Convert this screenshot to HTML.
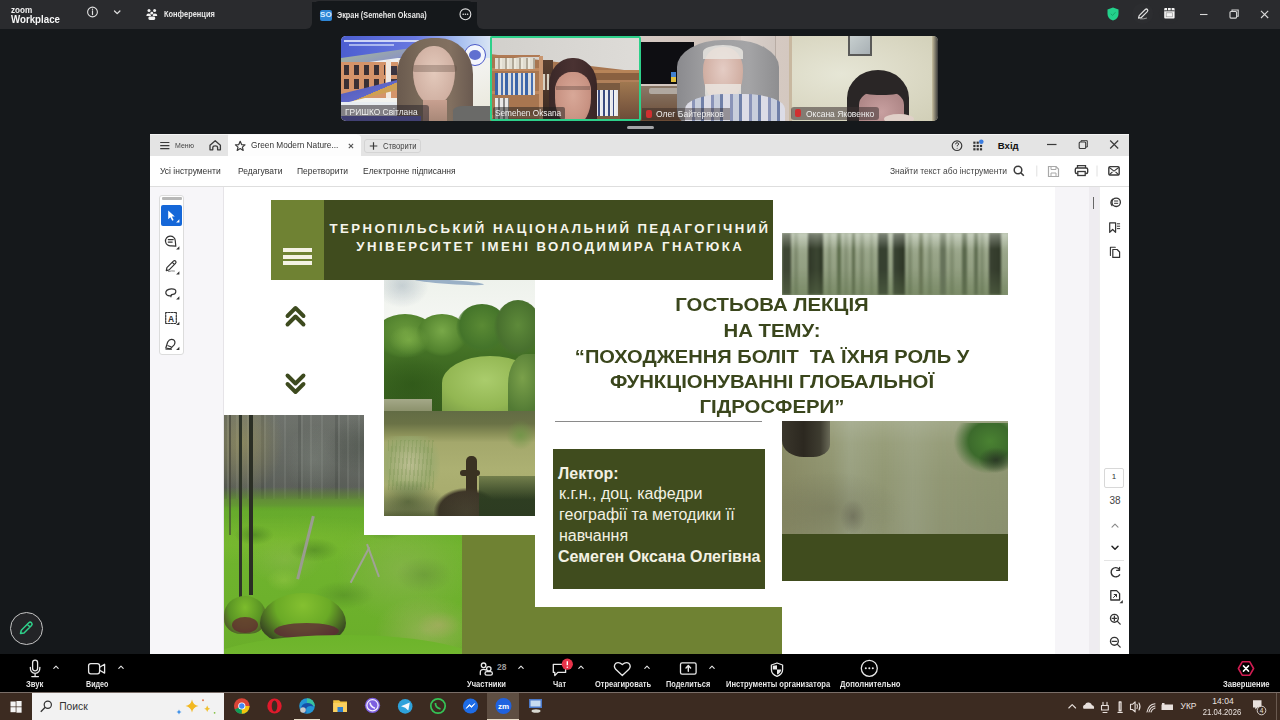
<!DOCTYPE html>
<html><head><meta charset="utf-8">
<style>
*{margin:0;padding:0;box-sizing:border-box}
html,body{width:1280px;height:720px;overflow:hidden;background:#15181b;font-family:"Liberation Sans",sans-serif}
.a{position:absolute}
.t{position:absolute;white-space:nowrap;line-height:1}
svg{position:absolute;overflow:visible}
.lb{top:679.5px;font-size:9px;font-weight:bold;color:#e6e6e6;transform-origin:0 0}
</style></head><body>

<!-- ZOOM TITLE BAR -->
<div class="a" style="left:0;top:0;width:312px;height:29.4px;background:#2a2b2e;border-radius:0 0 6px 0"></div>
<div class="a" style="left:477px;top:0;width:803px;height:29.4px;background:#2a2b2e;border-radius:0 0 0 6px"></div>
<div class="a" style="left:300px;top:0;width:190px;height:1.5px;background:#2a2b2e"></div>
<div class="a" id="tab" style="left:313px;top:1.4px;width:161px;height:30px;background:#15181b;border-radius:6px 6px 0 0"></div>


<div class="t" id="zoomt" style="transform:scaleX(0.87);transform-origin:0 0;left:10.5px;top:4.6px;font-size:9.4px;font-weight:bold;color:#f2f2f2">zoom</div>
<div class="t" id="wpt" style="transform:scaleX(0.86);transform-origin:0 0;left:10.5px;top:13.8px;font-size:11.3px;font-weight:bold;color:#f7f7f7">Workplace</div>
<div class="t" id="konf" style="transform:scaleX(0.81);transform-origin:0 0;left:164px;top:10.2px;font-size:9.2px;font-weight:bold;color:#e8e8e8">Конференция</div>
<div class="a" style="left:319.8px;top:9.5px;width:12.2px;height:11px;background:#2e86d6;border-radius:2px"></div>
<div class="t" style="left:319.8px;top:11px;width:12.2px;text-align:center;font-size:8px;font-weight:bold;color:#d8ecff">SO</div>
<div class="t" id="ekran" style="transform:scaleX(0.78);transform-origin:0 0;left:337.3px;top:9.8px;font-size:9.4px;font-weight:bold;color:#e8e8e8">Экран (Semehen Oksana)</div>
<svg style="left:0;top:0" width="1280" height="720">
 <g fill="none" stroke="#e0e0e0" stroke-linecap="round" stroke-linejoin="round">
  <circle cx="92.5" cy="12" r="4.9" stroke-width="1.1"/>
  <path d="M92.5 10.8 V14.6" stroke-width="1.2"/>
  <path d="M114.5 11 L117.2 13.6 L119.9 11" stroke-width="1.3"/>
  <circle cx="465.4" cy="14.3" r="5.4" stroke-width="1.1"/>
 </g>
 <g fill="#e0e0e0">
  <circle cx="92.5" cy="9.3" r="0.7"/>
  <circle cx="463.2" cy="14.3" r="0.8"/><circle cx="465.4" cy="14.3" r="0.8"/><circle cx="467.6" cy="14.3" r="0.8"/>
 </g>
 <!-- people icon -->
 <g fill="#f0f0f0">
  <circle cx="149" cy="10.6" r="1.5"/><circle cx="154.6" cy="10.6" r="1.5"/><circle cx="151.8" cy="13.2" r="1.4"/>
  <path d="M146.4 15.4 q0-1.8 2.2-1.8 q1.6 0 2.2 1.2 h0.1 v1.1 h-4.5z"/>
  <path d="M157.2 15.4 q0-1.8 -2.2-1.8 q-1.6 0 -2.2 1.2 v1.1 h4.4z"/>
  <rect x="148.4" y="16.6" width="6.8" height="3.3" rx="1.3"/>
 </g>
 <!-- green shield -->
 <path d="M1113 7.6 L1118.5 9.6 V14 Q1118.5 18.6 1113 20.6 Q1107.5 18.6 1107.5 14 V9.6 Z" fill="#23d18b"/>
 <path d="M1110.8 13.8 L1112.5 15.5 L1115.5 12.2" fill="none" stroke="#15a86a" stroke-width="1"/>
 <!-- pen circle -->
 <circle cx="1142.7" cy="13.5" r="10.5" fill="#2c2d30"/>
 <path d="M1138.5 18.2 L1139.2 15.6 L1145.3 9.5 Q1146.5 8.5 1147.4 9.5 Q1148.3 10.6 1147.3 11.6 L1141.1 17.7 Z" fill="none" stroke="#e0e0e0" stroke-width="1.2" stroke-linejoin="round"/>
 <path d="M1140 18.8 Q1144 19.2 1147 18" fill="none" stroke="#aaa" stroke-width="0.9"/>
 <!-- calendar/apps -->
 <circle cx="1169.4" cy="13.3" r="10.5" fill="#2a2b2e"/>
 <rect x="1164.2" y="8" width="10.4" height="10.6" rx="1" fill="#f4f4f4"/>
 <path d="M1164.2 10.8 H1174.6" stroke="#2a2b2e" stroke-width="0.9"/>
 <path d="M1167.5 8 v2.6 M1171.2 8 v2.6" stroke="#2a2b2e" stroke-width="0.9"/>
 <rect x="1166.2" y="12.8" width="6.4" height="4" fill="none" stroke="#999" stroke-width="0.7"/>
 <!-- window controls -->
 <g fill="none" stroke="#d8d8d8" stroke-width="1.1">
  <path d="M1200 14.5 H1207.5"/>
  <rect x="1230" y="11.5" width="6.6" height="6.6" rx="1"/>
  <path d="M1232 11.5 V10 H1238.2 V16.2 H1236.6"/>
  <path d="M1261 10.8 L1268.2 18 M1268.2 10.8 L1261 18"/>
 </g>
</svg>

<!-- GALLERY -->
<div class="a" id="g1" style="left:341px;top:36px;width:149px;height:85px;border-radius:5px 0 0 5px;overflow:hidden;background:linear-gradient(160deg,#e8eef8 0%,#f2f2ee 60%,#e8e6d8 100%)"><div class="a" style="left:0;top:0;right:0;bottom:0;filter:blur(0.6px)">
 <div class="a" style="left:0;top:0;width:149px;height:22px;background:linear-gradient(90deg,#4c5ed0,#6878e0 50%,#a8c0f0 80%,#d8e4f4)"></div>
 <div class="a" style="left:3px;top:4px;width:75px;height:2px;background:rgba(235,240,255,0.8)"></div>
 <div class="a" style="left:8px;top:8px;width:45px;height:1.5px;background:rgba(225,235,255,0.6)"></div>
 <div class="a" style="left:0;top:22px;width:78px;height:8px;background:linear-gradient(170deg,#a0b0a0,#8890c8);transform:skewY(-8deg);transform-origin:0 0"></div>
 <div class="a" style="left:0;top:26px;width:72px;height:36px;background:#d4946a"></div>
 <div class="a" style="left:0;top:29px;width:44px;height:10px;background:repeating-linear-gradient(90deg,#d4946a 0 3px,#3a3034 3px 8px,#d4946a 8px 10px)"></div>
 <div class="a" style="left:0;top:43px;width:44px;height:10px;background:repeating-linear-gradient(90deg,#d4946a 0 3px,#3a3034 3px 8px,#d4946a 8px 10px)"></div>
 <div class="a" style="left:50px;top:30px;width:6px;height:9px;background:#3a3440"></div>
 <div class="a" style="left:50px;top:43px;width:6px;height:9px;background:#3a3440"></div>
 <div class="a" style="left:45px;top:24px;width:5px;height:38px;background:#f0e8e0"></div>
 <div class="a" style="left:57px;top:24px;width:5px;height:38px;background:#f0e4d8"></div>
 <div class="a" style="left:0;top:58px;width:80px;height:10px;background:linear-gradient(170deg,#5860c0,#6068c8 50%,#d0a050 51%,#c8a060);transform:skewY(-14deg);transform-origin:0 100%"></div>
 <div class="a" style="left:0;top:66px;width:60px;height:19px;background:#e8ecf0"></div>
 <div class="a" style="left:123px;top:8px;width:22px;height:22px;border-radius:50%;background:#f4f6fc;border:1.5px solid #4a58c8"></div>
 <div class="a" style="left:128px;top:14px;width:12px;height:10px;border-radius:50%;background:#6070d0"></div>
 <div class="a" style="left:56px;top:2px;width:76px;height:90px;border-radius:45% 45% 20% 20%/40% 40% 10% 10%;background:linear-gradient(90deg,#6a5a4e,#7a6a5a 30%,#827060 70%,#6a5a50)"></div>
 <div class="a" style="left:72px;top:10px;width:42px;height:58px;border-radius:48% 48% 45% 45%/45% 45% 55% 55%;background:radial-gradient(ellipse at 50% 45%,#e4cabc,#d0b0a2 70%,#b89888)"></div>
 <div class="a" style="left:71px;top:29px;width:45px;height:7px;border-radius:3px;background:rgba(100,80,70,0.35)"></div>
 <div class="a" style="left:112px;top:70px;width:37px;height:15px;border-radius:30% 0 0 0;background:#6a6a68"></div>
 <div class="a" style="left:82px;top:64px;width:24px;height:21px;background:linear-gradient(to bottom,#c8a090,#a88878)"></div>
 <div class="a" style="left:0;top:80px;width:80px;height:5px;background:#5a5ec8"></div>
 <div class="a" style="left:0;top:68.5px;width:88px;height:16.5px;background:rgba(45,40,45,0.55);border-radius:0 3px 0 0"></div>
 <div class="t" id="n1" style="transform:scaleX(0.915);transform-origin:0 0;left:4px;top:72px;font-size:9.2px;color:#f0f0f0">ГРИШКО Світлана</div>
</div></div>
<div class="a" id="g2" style="left:490px;top:36px;width:151px;height:85px;overflow:hidden;background:#a87650">
 <div class="a" style="left:0;top:0;width:151px;height:40px;background:linear-gradient(90deg,#d2d0cc,#dedcd8);clip-path:polygon(0 0,151px 0,151px 36px,0 18px)"></div>
 <div class="a" style="left:2px;top:19px;width:48px;height:64px;background:
   linear-gradient(to bottom,#b07a54 0 2px,transparent 2px 13px,#c08a60 13px 16px,transparent 16px 36px,#c08a60 36px 39px,transparent 39px 60px,#c08a60 60px 63px,transparent 63px)"></div>
 <div class="a" style="left:5px;top:22px;width:40px;height:11px;background:repeating-linear-gradient(90deg,#e0dcd0 0 3px,#b0a898 3px 5px,#ece8dc 5px 7px)"></div>
 <div class="a" style="left:5px;top:37px;width:40px;height:22px;background:repeating-linear-gradient(90deg,#3a64a8 0 3px,#d8dce0 3px 6px,#4a70b0 6px 8px,#e0e0e0 8px 10px)"></div>
 <div class="a" style="left:5px;top:62px;width:14px;height:21px;background:repeating-linear-gradient(90deg,#e8e8e8 0 3px,#888 3px 5px)"></div>
 <div class="a" style="left:49px;top:20px;width:4px;height:65px;background:#c89670"></div>
 <div class="a" style="left:53px;top:24px;width:10px;height:61px;background:linear-gradient(to bottom,#5a4030,#3a2a22)"></div>
 <div class="a" style="left:53px;top:38px;width:8px;height:16px;background:repeating-linear-gradient(90deg,#d8d0c0 0 2px,#6a5040 2px 4px)"></div>
 <div class="a" style="left:104px;top:34px;width:47px;height:51px;background:linear-gradient(to bottom,#b88458 0 3px,#8a6040 3px 10px,#b0805a 10px 13px,#7a5a40 13px 50px)"></div>
 <div class="a" style="left:106px;top:54px;width:22px;height:26px;background:repeating-linear-gradient(90deg,#e8e8ee 0 2px,#3a4a80 2px 3.5px,#f0f0f0 3.5px 5px)"></div>
 <div class="a" style="left:130px;top:46px;width:21px;height:39px;background:linear-gradient(to bottom,#a07850,#6a4a38)"></div>
 <div class="a" style="left:59px;top:22px;width:48px;height:70px;border-radius:48% 48% 8% 8%/38% 38% 5% 5%;background:linear-gradient(90deg,#3a2828,#4a3232 50%,#3a2626)"></div>
 <div class="a" style="left:65px;top:36px;width:36px;height:52px;border-radius:45% 45% 40% 40%/35% 35% 50% 50%;background:radial-gradient(ellipse at 50% 45%,#d8a898,#c89282 65%,#a87868)"></div>
 <div class="a" style="left:66px;top:50px;width:34px;height:4px;background:rgba(80,60,55,0.35)"></div>
 <div class="a" style="left:3px;top:71px;width:72px;height:12.5px;background:rgba(30,30,30,0.5);border-radius:2px"></div>
 <div class="t" id="n2" style="transform:scaleX(0.9);transform-origin:0 0;left:5px;top:73px;font-size:9.2px;color:#f0f0f0">Semehen Oksana</div>
 <div class="a" style="left:0;top:0;width:151px;height:85px;border:2px solid #2dd08a;border-radius:2px"></div>
</div>
<div class="a" id="g3" style="left:641px;top:36px;width:148px;height:85px;overflow:hidden;background:linear-gradient(90deg,#d4c8c2 0%,#d0c4bc 55%,#d8ccc6 70%,#d4c8c0 100%)"><div class="a" style="left:0;top:0;right:0;bottom:0;filter:blur(0.6px)">
 <div class="a" style="left:134px;top:0;width:1px;height:85px;background:#b8aca4"></div>
 <div class="a" style="left:100px;top:0;width:34px;height:85px;background:linear-gradient(90deg,#dcd2cc,#d0c6c0)"></div>
 <div class="a" style="left:0;top:6px;width:53px;height:42px;background:#0e0e12"></div>
 <div class="a" style="left:0;top:50px;width:48px;height:35px;background:linear-gradient(to bottom,#8a7868,#6a4a34)"></div>
 <div class="a" style="left:8px;top:52px;width:30px;height:6px;background:#b0a8a0;border-radius:2px"></div>
 <div class="a" style="left:30px;top:36px;width:5px;height:10px;background:linear-gradient(to bottom,#4080d0 50%,#e0c040 50%)"></div>
 <div class="a" style="left:36px;top:4px;width:102px;height:90px;border-radius:45% 45% 35% 35%/30% 30% 20% 20%;background:linear-gradient(90deg,#8a8a8e,#a0a0a2 30%,#a4a4a6 70%,#8e8e90)"></div>
 <div class="a" style="left:62px;top:11px;width:40px;height:56px;border-radius:45% 45% 45% 45%/40% 40% 55% 55%;background:radial-gradient(ellipse at 50% 40%,#e4ccc4,#d2b0a4 65%,#c0a090)"></div>
 <div class="a" style="left:62px;top:9px;width:40px;height:14px;border-radius:50% 50% 0 0;background:rgba(235,232,228,0.8)"></div>
 <div class="a" style="left:64px;top:48px;width:36px;height:20px;border-radius:0 0 50% 50%;background:rgba(235,232,228,0.8)"></div>
 <div class="a" style="left:44px;top:58px;width:100px;height:30px;border-radius:40% 40% 0 0/50% 50% 0 0;background:repeating-linear-gradient(90deg,#dcdce6 0 7px,#8a94b8 7px 10px,#c8cedc 10px 16px,#7080a8 16px 19px)"></div>
 <div class="a" style="left:1px;top:72px;width:88px;height:12px;background:rgba(40,30,30,0.4)"></div>
 <div class="a" style="left:5px;top:74px;width:6px;height:8px;background:#d03030;border-radius:2px"></div>
 <div class="t" id="n3" style="transform:scaleX(0.93);transform-origin:0 0;left:15px;top:73.5px;font-size:9.2px;color:#f0f0f0">Олег Байтеряков</div>
</div></div>
<div class="a" id="g4" style="left:789px;top:36px;width:149px;height:85px;border-radius:0 5px 5px 0;overflow:hidden;background:radial-gradient(ellipse at 35% 45%,#e6e6d6,#dcdac6 50%,#d0ceb6)"><div class="a" style="left:0;top:0;right:0;bottom:0;filter:blur(0.6px)">
 <div class="a" style="left:0;top:0;width:3px;height:85px;background:#c8b8a0"></div>
 <div class="a" style="left:59px;top:-1px;width:24px;height:21px;background:linear-gradient(135deg,#c8d0d0,#a8b0b4);border:2px solid #5a5a58;border-top:none"></div>
 <div class="a" style="left:143px;top:0;width:6px;height:85px;background:linear-gradient(90deg,#c8c0a0,#3a3a3a)"></div>
 <div class="a" style="left:58px;top:34px;width:62px;height:62px;border-radius:50% 50% 20% 20%/45% 45% 10% 10%;background:#2a2626"></div>
 <div class="a" style="left:70px;top:55px;width:45px;height:35px;border-radius:40% 40% 10% 10%;background:radial-gradient(ellipse at 50% 60%,#c8a0a0,#b08888 70%)"></div>
 <div class="a" style="left:70px;top:47px;width:45px;height:12px;border-radius:0 0 40% 40%;background:#2a2626"></div>
 <div class="a" style="left:95px;top:78px;width:30px;height:10px;border-radius:50%;background:#e0d0c8"></div>
 <div class="a" style="left:2px;top:70.5px;width:88px;height:13px;background:rgba(60,50,50,0.55);border-radius:3px"></div>
 <div class="a" style="left:6px;top:73px;width:6px;height:8px;background:#d03030;border-radius:2px"></div>
 <div class="t" id="n4" style="transform:scaleX(0.925);transform-origin:0 0;left:16.8px;top:73.5px;font-size:9.2px;color:#f0f0f0">Оксана Яковенко</div>
</div></div>
<div class="a" style="left:627px;top:126px;width:27px;height:2.5px;background:#a3a5a8;border-radius:2px"></div>

<!-- PDF WINDOW -->
<div class="a" id="win" style="left:150.3px;top:134px;width:979px;height:520px;background:#fff;overflow:hidden">
  <div class="a" style="left:0;top:0;width:980px;height:22px;background:#e4e4e4;border-top:1px solid #f4f4f4"></div>
  <div class="a" style="left:78px;top:0;width:129px;height:22px;background:#fafafa"></div>
  <div class="a" style="left:0;top:52px;width:980px;height:1px;background:#dedede"></div>
  <div class="a" style="left:0;top:53px;width:74px;height:467px;background:#f7f6f9;border-right:1px solid #e6e4e8"></div>
  <div class="a" style="left:905px;top:53px;width:44px;height:467px;background:#f6f5f8"></div>
  <div class="a" style="left:939px;top:53px;width:10px;height:467px;background:#eeecf0"></div>
  <div class="a" style="left:949px;top:53px;width:31px;height:467px;background:#fff;border-left:1px solid #eeeeee"></div>
</div>



<!-- PDF CHROME -->
<div class="a" style="left:228px;top:135px;width:133px;height:21px;background:#fdfdfd;border-radius:3px 3px 0 0"></div>
<div class="a" style="left:363.5px;top:138.5px;width:57px;height:14.5px;background:#e6e6e6;border:1px solid #d4d4d4;border-radius:3px"></div>
<svg style="left:0;top:0" width="1280" height="720" fill="none" stroke="#3a3a3a">
 <!-- hamburger -->
 <path d="M160.2 142.5h9.2M160.2 145.6h9.2M160.2 148.7h9.2" stroke-width="1.2"/>
 <!-- home -->
 <path d="M210 149.8 V145.3 L215.2 140.8 L220.4 145.3 V149.8 H217.6 V147.6 Q217.6 145.8 215.2 145.8 Q212.8 145.8 212.8 147.6 V149.8 Z" stroke-width="1.3" stroke-linejoin="round"/>
 <!-- star -->
 <path d="M240.2 141.3 L241.6 144.6 L245 144.9 L242.4 147.1 L243.2 150.4 L240.2 148.6 L237.2 150.4 L238 147.1 L235.4 144.9 L238.8 144.6 Z" stroke-width="1.2" stroke-linejoin="round"/>
 <!-- tab close -->
 <path d="M348.8 143.8l4.3 4.3M353.1 143.8l-4.3 4.3" stroke-width="1.1" stroke="#555"/>
 <!-- plus -->
 <path d="M373.5 142.3v7.5M369.8 146h7.5" stroke-width="1.2"/>
 <!-- help -->
 <circle cx="957" cy="145.7" r="4.8" stroke-width="1.2"/>
 <path d="M955.6 144.3 q0-1.6 1.5-1.6 q1.5 0 1.5 1.4 q0 1-1.4 1.5 v0.8" stroke-width="1"/>
 <circle cx="957.1" cy="148.3" r="0.5" fill="#3a3a3a" stroke="none"/>
 <!-- window controls -->
 <path d="M1047 144.5h9.5" stroke-width="1.2"/>
 <rect x="1079.2" y="142" width="6.5" height="6.5" rx="1" stroke-width="1.1"/>
 <path d="M1081 142v-1.3h6.3v6.3h-1.5" stroke-width="1"/>
 <path d="M1110.2 140.5l8 8M1118.2 140.5l-8 8" stroke-width="1.2"/>
 <!-- search -->
 <circle cx="1018" cy="170" r="3.8" stroke-width="1.5"/>
 <path d="M1020.8 172.8l3 3" stroke-width="1.6"/>
 <!-- save (disabled) -->
 <path d="M1048.5 166.5h7.5l2.5 2.5v7.5h-10z" stroke="#a8a8a8" stroke-width="1.2"/>
 <path d="M1051 166.5v3h5v-3M1051 176.5v-3.5h5v3.5" stroke="#a8a8a8" stroke-width="1"/>
 <!-- printer -->
 <path d="M1077.5 168v-2.3h8v2.3" stroke-width="1.3"/>
 <rect x="1075.3" y="168" width="12.4" height="5.5" rx="1.5" stroke-width="1.4"/>
 <rect x="1077.8" y="171.5" width="7.4" height="4" stroke-width="1.3" fill="#fff"/>
 <!-- mail -->
 <rect x="1108.8" y="166.6" width="10.4" height="8.4" rx="1.3" stroke-width="1.4"/>
 <path d="M1109 167.3l5 3.8l5-3.8M1109 175l3.5-3.2M1119 175l-3.5-3.2" stroke-width="1.1"/>
 <!-- separators -->
 <path d="M1036.8 165.5v11M1097 165.5v11" stroke="#e0e0e0" stroke-width="1"/>
</svg>
<!-- apps grid -->
<svg style="left:0;top:0" width="1280" height="720">
 <g fill="#333">
  <rect x="973.3" y="141.6" width="2.2" height="2.2"/><rect x="976.6" y="141.6" width="2.2" height="2.2"/>
  <rect x="973.3" y="144.9" width="2.2" height="2.2"/><rect x="976.6" y="144.9" width="2.2" height="2.2"/><rect x="979.9" y="144.9" width="2.2" height="2.2"/>
  <rect x="973.3" y="148.2" width="2.2" height="2.2"/><rect x="976.6" y="148.2" width="2.2" height="2.2"/><rect x="979.9" y="148.2" width="2.2" height="2.2"/>
 </g>
 <circle cx="981.3" cy="141.8" r="2.3" fill="#3b7de0"/>
</svg>
<div class="t" id="menu" style="transform:scaleX(0.91);transform-origin:0 0;left:175px;top:141.5px;font-size:7.7px;color:#444">Меню</div>
<div class="t" id="gmn" style="transform:scaleX(0.9);transform-origin:0 0;left:250.8px;top:141.4px;font-size:9.2px;color:#333">Green Modern Nature...</div>
<div class="t" id="stv" style="transform:scaleX(0.89);transform-origin:0 0;left:382.6px;top:141.8px;font-size:8.6px;color:#444">Створити</div>
<div class="t" id="vhid" style="left:997.8px;top:140.6px;font-size:9.6px;font-weight:bold;color:#111">Вхід</div>
<div class="t" id="tb1" style="transform:scaleX(0.905);transform-origin:0 0;left:160px;top:165.8px;font-size:9.4px;color:#333">Усі інструменти</div>
<div class="t" id="tb2" style="transform:scaleX(0.905);transform-origin:0 0;left:237.5px;top:165.8px;font-size:9.4px;color:#333">Редагувати</div>
<div class="t" id="tb3" style="transform:scaleX(0.905);transform-origin:0 0;left:297px;top:165.8px;font-size:9.4px;color:#333">Перетворити</div>
<div class="t" id="tb4" style="transform:scaleX(0.905);transform-origin:0 0;left:363px;top:165.8px;font-size:9.4px;color:#333">Електронне підписання</div>
<div class="t" id="tb5" style="transform:scaleX(0.905);transform-origin:0 0;left:890px;top:165.8px;font-size:9.4px;color:#444">Знайти текст або інструменти</div>

<!-- SLIDE -->
<div class="a" id="slide" style="left:224px;top:187px;width:831px;height:467px;background:#fff;overflow:hidden">
</div>
<div class="a" style="left:271px;top:200px;width:52.5px;height:80px;background:#6f8233"></div>
<div class="a" style="left:323.5px;top:200px;width:449px;height:79.5px;background:#404c1e"></div>
<div class="a" style="left:283px;top:248px;width:29px;height:4px;background:#f4f2e4"></div>
<div class="a" style="left:283px;top:255px;width:29px;height:4px;background:#f4f2e4"></div>
<div class="a" style="left:283px;top:261px;width:29px;height:4px;background:#f4f2e4"></div>
<div class="t" id="uni1" style="left:329.5px;top:222.3px;font-size:13.2px;font-weight:bold;color:#f6f5ec;letter-spacing:2.45px">ТЕРНОПІЛЬСЬКИЙ НАЦІОНАЛЬНИЙ ПЕДАГОГІЧНИЙ</div>
<div class="t" id="uni2" style="left:356.3px;top:240.3px;font-size:13.2px;font-weight:bold;color:#f6f5ec;letter-spacing:2.45px">УНІВЕРСИТЕТ ІМЕНІ ВОЛОДИМИРА ГНАТЮКА</div>

<!-- forest photo -->
<div class="a" id="forest" style="left:782px;top:233px;width:226px;height:62px;overflow:hidden;background:linear-gradient(to bottom,#b0baa4 0%,#98a488 35%,#8a9878 100%)"><div class="a" style="left:0;top:0;right:0;bottom:0;filter:blur(0.8px)">
<div class="a" style="left:0;top:0;width:226px;height:62px;background:linear-gradient(90deg, rgba(0,0,0,0) 0 12px, rgba(80,95,65,0.35) 12px 16px, rgba(0,0,0,0) 16px 46px, rgba(80,95,65,0.3) 46px 49px, rgba(0,0,0,0) 49px 62px, rgba(90,105,75,0.3) 62px 66px, rgba(0,0,0,0) 66px 78px, rgba(80,95,65,0.35) 78px 82px, rgba(0,0,0,0) 82px 88px, rgba(90,105,75,0.3) 88px 91px, rgba(0,0,0,0) 91px 126px, rgba(80,95,65,0.35) 126px 130px, rgba(0,0,0,0) 130px 146px, rgba(80,95,65,0.3) 146px 150px, rgba(0,0,0,0) 150px 168px, rgba(90,105,75,0.35) 168px 172px, rgba(0,0,0,0) 172px 198px, rgba(80,95,65,0.3) 198px 202px, rgba(0,0,0,0) 202px)"></div>
<div class="a" style="left:0px;top:0;width:9px;height:62px;background:#3e4634"></div>
<div class="a" style="left:26px;top:0;width:15px;height:62px;background:linear-gradient(90deg,#2e3626,#3c4632 60%,#2a3222)"></div>
<div class="a" style="left:96px;top:0;width:10px;height:62px;background:#364030"></div>
<div class="a" style="left:111px;top:0;width:12px;height:62px;background:linear-gradient(90deg,#3a4434,#2c3424)"></div>
<div class="a" style="left:137px;top:0;width:4px;height:62px;background:#6a7658"></div>
<div class="a" style="left:158px;top:0;width:6px;height:62px;background:#66725a"></div>
<div class="a" style="left:207px;top:0;width:12px;height:62px;background:linear-gradient(90deg,#3a4232,#303828)"></div>
<div class="a" style="left:55px;top:0;width:4px;height:62px;background:#5e6e4e"></div>
<div class="a" style="left:70px;top:0;width:3px;height:62px;background:#5e6c4e"></div>
<div class="a" style="left:180px;top:0;width:5px;height:62px;background:#5a684c"></div>
<div class="a" style="left:192px;top:0;width:4px;height:62px;background:#606e52"></div>
<div class="a" style="left:0;top:0;width:226px;height:16px;background:linear-gradient(to bottom,rgba(235,240,230,0.4),rgba(235,240,230,0))"></div>
<div class="a" style="left:0;top:36px;width:226px;height:26px;background:linear-gradient(to bottom,rgba(100,120,80,0),rgba(100,120,80,0.4))"></div>
</div></div>
<!-- moss photo -->
<div class="a" id="moss" style="left:224px;top:415px;width:238px;height:239px;overflow:hidden;
background:linear-gradient(to bottom, #747872 0%, #686c66 20%, #60645e 30%, #5e6e4c 34%, #66aa2c 39%, #70b42e 55%, #6aae2a 100%);"><div class="a" style="left:0;top:0;right:0;bottom:0;filter:blur(0.7px)">
<div class="a" style="left:0;top:0;width:238px;height:84px;background:repeating-linear-gradient(90deg, rgba(40,44,40,0.25) 0 3px, rgba(140,146,140,0.12) 3px 5px, rgba(55,60,55,0.15) 5px 12px, rgba(160,165,155,0.12) 12px 14px, rgba(70,75,68,0.12) 14px 23px, rgba(150,155,148,0.14) 23px 25px, rgba(60,64,58,0.1) 25px 37px)"></div>
<div class="a" style="left:0;top:0;width:60px;height:80px;background:radial-gradient(ellipse at 30% 35%, rgba(170,160,90,0.5), rgba(170,160,90,0) 70%)"></div>
<div class="a" style="left:150px;top:0;width:88px;height:80px;background:rgba(50,52,55,0.25)"></div>
<div class="a" style="left:60px;top:10px;width:60px;height:70px;background:radial-gradient(ellipse, rgba(150,160,150,0.25), rgba(150,160,150,0) 70%)"></div>
<div class="a" style="left:100px;top:0px;width:90px;height:60px;background:radial-gradient(ellipse, rgba(40,50,40,0.3), rgba(40,50,40,0) 70%)"></div>
<div class="a" style="left:-10px;top:72px;width:260px;height:24px;background:linear-gradient(to bottom, rgba(90,110,60,0) 0%, rgba(100,150,50,0.7) 60%, rgba(120,176,52,0) 100%)"></div>
<div class="a" style="left:0;top:95px;width:238px;height:60px;background:radial-gradient(ellipse at 20% 50%, rgba(130,190,50,0.5), rgba(130,190,50,0) 60%)"></div>
<div class="a" style="left:110px;top:100px;width:128px;height:110px;background:radial-gradient(ellipse at 55% 50%, rgba(150,180,95,0.5), rgba(150,180,95,0) 70%)"></div>
<div class="a" style="left:150px;top:180px;width:88px;height:59px;background:radial-gradient(ellipse at 60% 60%, rgba(180,180,120,0.5), rgba(180,180,120,0) 70%)"></div>
<div class="a" style="left:20px;top:120px;width:80px;height:50px;background:radial-gradient(ellipse, rgba(150,185,90,0.4), rgba(150,185,90,0) 70%)"></div>
<div class="a" style="left:0;top:90px;width:238px;height:149px;background:
 radial-gradient(ellipse 20px 10px at 30px 30px, rgba(60,110,30,0.5), rgba(60,110,30,0)),
 radial-gradient(ellipse 25px 12px at 90px 45px, rgba(60,110,30,0.45), rgba(60,110,30,0)),
 radial-gradient(ellipse 22px 10px at 160px 25px, rgba(60,110,30,0.4), rgba(60,110,30,0)),
 radial-gradient(ellipse 18px 12px at 60px 75px, rgba(150,200,70,0.5), rgba(150,200,70,0)),
 radial-gradient(ellipse 30px 14px at 120px 90px, rgba(70,120,35,0.4), rgba(70,120,35,0)),
 radial-gradient(ellipse 28px 18px at 200px 70px, rgba(90,130,50,0.4), rgba(90,130,50,0)),
 radial-gradient(ellipse 22px 14px at 215px 120px, rgba(180,170,110,0.5), rgba(180,170,110,0))"></div>
<div class="a" style="left:15px;top:0;width:2.5px;height:185px;background:#2e3428"></div>
<div class="a" style="left:25px;top:0;width:4px;height:180px;background:#2a2e24"></div>
<div class="a" style="left:5px;top:0;width:1.5px;height:120px;background:rgba(60,60,50,0.6)"></div>
<div class="a" style="left:80px;top:100px;width:2.5px;height:65px;background:#9a9c90;transform:rotate(14deg)"></div>
<div class="a" style="left:135px;top:130px;width:2px;height:40px;background:#a0a296;transform:rotate(28deg)"></div>
<div class="a" style="left:148px;top:128px;width:2px;height:35px;background:#a0a296;transform:rotate(-20deg)"></div>
<div class="a" style="left:0px;top:181px;width:42px;height:38px;border-radius:50% 50% 40% 40%;background:radial-gradient(ellipse at 50% 30%, #7cbc2c, #5a9424 55%, #4a3030 100%)"></div>
<div class="a" style="left:36px;top:178px;width:86px;height:50px;border-radius:50% 50% 35% 35%/60% 60% 40% 40%;background:radial-gradient(ellipse at 50% 25%, #84c030 0%, #6aaa26 45%, #3a4a22 80%, #5a2838 100%)"></div>
<div class="a" style="left:8px;top:202px;width:26px;height:16px;border-radius:50%;background:rgba(100,30,50,0.7)"></div>
<div class="a" style="left:50px;top:208px;width:65px;height:16px;border-radius:50%;background:rgba(95,35,55,0.75)"></div>
<div class="a" style="left:-20px;top:220px;width:280px;height:40px;border-radius:50% 50% 0 0/30px 30px 0 0;background:linear-gradient(to bottom,#6cb42a,#78b834)"></div>
</div></div>
<!-- white card around pond -->
<div class="a" style="left:364px;top:280px;width:171px;height:255px;background:#fff"></div>
<!-- pond photo -->
<div class="a" id="pond" style="left:384px;top:280px;width:151px;height:236px;overflow:hidden;background:linear-gradient(to bottom,#eef2ec 0%,#f4f6f2 15%,#eef2ea 20%)"><div class="a" style="left:0;top:0;right:0;bottom:0;filter:blur(0.7px)">
<div class="a" style="left:0;top:0;width:45px;height:28px;background:radial-gradient(ellipse at 40% 20%, rgba(120,140,160,0.35), rgba(120,140,160,0) 70%)"></div>
<div class="a" style="left:30px;top:0;width:70px;height:4px;border-radius:50%;background:rgba(70,110,160,0.5);transform:rotate(4deg)"></div>
<div class="a" style="left:-5px;top:46px;width:160px;height:90px;background:linear-gradient(to bottom,#4e7e2c,#3e6a22 45%,#345a1c 100%)"></div>
<div class="a" style="left:-10px;top:34px;width:62px;height:44px;border-radius:50%;background:radial-gradient(ellipse at 50% 40%,#6a9a3c,#4e7e2c 60%,rgba(78,126,44,0) 72%)"></div>
<div class="a" style="left:32px;top:34px;width:52px;height:42px;border-radius:50%;background:radial-gradient(ellipse at 50% 40%,#78a848,#52822e 60%,rgba(82,130,46,0) 72%)"></div>
<div class="a" style="left:72px;top:24px;width:52px;height:48px;border-radius:50%;background:radial-gradient(ellipse at 50% 45%,#5a8a34,#44742a 60%,rgba(68,116,42,0) 72%)"></div>
<div class="a" style="left:110px;top:20px;width:48px;height:56px;border-radius:50%;background:radial-gradient(ellipse at 50% 45%,#5e8a3a,#48702e 60%,rgba(72,112,46,0) 72%)"></div>
<div class="a" style="left:5px;top:45px;width:40px;height:30px;background:radial-gradient(ellipse,rgba(140,190,80,0.55),rgba(140,190,80,0) 70%)"></div>
<div class="a" style="left:0;top:75px;width:70px;height:58px;background:radial-gradient(ellipse at 40% 50%,rgba(40,80,20,0.5),rgba(40,80,20,0) 70%)"></div>
<div class="a" style="left:58px;top:76px;width:96px;height:60px;border-radius:50% 50% 10% 10%/45% 45% 0 0;background:radial-gradient(ellipse at 45% 40%, #aacc6c, #92b652 55%, #6e9040 100%)"></div>
<div class="a" style="left:124px;top:74px;width:36px;height:60px;border-radius:50% 0 0 0;background:radial-gradient(ellipse at 40% 40%, #7aa04a, #527a34 70%)"></div>
<div class="a" style="left:0;top:119px;width:48px;height:13px;background:linear-gradient(to bottom,#a4a888,#8a906a)"></div>
<div class="a" style="left:0;top:131px;width:151px;height:105px;background:linear-gradient(to bottom,#626c44 0%,#6a7246 12%,#8a9058 22%,#a4a86c 30%,#acb072 55%,#a8ac6e 80%,#8e9460 94%,#6a7244 100%)"></div>
<div class="a" style="left:0;top:156px;width:56px;height:62px;background:radial-gradient(ellipse at 45% 45%, rgba(190,192,150,0.9), rgba(150,168,110,0.75) 50%, rgba(120,140,80,0) 75%)"></div>
<div class="a" style="left:4px;top:160px;width:46px;height:50px;background:repeating-linear-gradient(95deg, rgba(110,140,70,0.25) 0 1.5px, rgba(0,0,0,0) 1.5px 4px)"></div>
<div class="a" style="left:0;top:200px;width:60px;height:36px;background:radial-gradient(ellipse at 40% 60%, rgba(50,70,35,0.55), rgba(50,70,35,0) 70%)"></div>
<div class="a" style="left:122px;top:140px;width:29px;height:30px;background:radial-gradient(ellipse, rgba(110,150,70,0.8), rgba(110,150,70,0) 70%)"></div>
<div class="a" style="left:82px;top:176px;width:11px;height:40px;background:#3a3222;border-radius:5px 5px 0 0"></div>
<div class="a" style="left:76px;top:190px;width:20px;height:6px;background:#3a3222;border-radius:3px"></div>
<div class="a" style="left:50px;top:208px;width:65px;height:34px;background:radial-gradient(ellipse at 50% 70%,#4a4232,#3e3628 60%,rgba(62,54,40,0) 72%)"></div>
<div class="a" style="left:95px;top:196px;width:60px;height:40px;background:linear-gradient(to bottom,rgba(60,80,40,0.5),#2e3e22 60%)"></div>
<div class="a" style="left:0;top:212px;width:151px;height:24px;background:linear-gradient(to bottom,rgba(40,50,30,0),rgba(40,50,30,0.2))"></div>
</div></div>
<!-- light green block -->
<div class="a" style="left:462px;top:535px;width:320px;height:119px;background:#6f8233"></div>
<div class="a" style="left:535px;top:420px;width:247px;height:187px;background:#fff"></div>
<!-- lecturer box -->
<div class="a" style="left:553px;top:449px;width:212px;height:140px;background:#404c1e"></div>
<!-- water photo -->
<div class="a" id="water" style="left:782px;top:421px;width:226px;height:113px;overflow:hidden;
background:linear-gradient(to bottom,#a4aa8a 0%,#989e7a 20%,#929874 50%,#8e9472 100%)"><div class="a" style="left:0;top:0;right:0;bottom:0;filter:blur(0.7px)">
<div class="a" style="left:0;top:0;width:226px;height:113px;background:linear-gradient(90deg, rgba(110,100,60,0.3) 0%, rgba(120,110,70,0.08) 22%, rgba(190,200,190,0.18) 30%, rgba(140,140,120,0) 45%, rgba(185,195,185,0.16) 58%, rgba(150,160,140,0.05) 70%, rgba(110,120,90,0.12) 100%)"></div>
<div class="a" style="left:0;top:50px;width:120px;height:63px;background:radial-gradient(ellipse at 40% 60%, rgba(100,100,75,0.35), rgba(100,100,75,0) 70%)"></div>
<div class="a" style="left:0;top:0;width:48px;height:36px;background:linear-gradient(90deg,#3a362c,#2c2820 45%,#3e3c30 80%,#6a6a58);border-radius:0 0 35% 45%"></div>
<div class="a" style="left:170px;top:2px;width:56px;height:52px;background:radial-gradient(ellipse at 68% 35%, #4a8232 0%, #3c6a2c 40%, rgba(62,100,44,0) 68%)"></div>
<div class="a" style="left:196px;top:26px;width:30px;height:26px;background:radial-gradient(ellipse at 60% 50%, rgba(40,50,36,0.85), rgba(40,50,36,0) 70%)"></div>
<div class="a" style="left:58px;top:78px;width:26px;height:35px;background:radial-gradient(ellipse, rgba(70,65,55,0.35), rgba(70,65,55,0) 70%)"></div>
</div></div>
<div class="a" style="left:782px;top:534px;width:226px;height:47px;background:#404c1e"></div>

<svg style="left:0;top:0" width="1280" height="720">
<polyline points="287.5,316 295.5,308 303.5,316" fill="none" stroke="#3d4a1e" stroke-width="3.9" stroke-linecap="round" stroke-linejoin="round"/>
<polyline points="287.5,324.5 295.5,316.5 303.5,324.5" fill="none" stroke="#3d4a1e" stroke-width="3.9" stroke-linecap="round" stroke-linejoin="round"/>
<polyline points="287.5,375.5 295.5,383.5 303.5,375.5" fill="none" stroke="#3d4a1e" stroke-width="3.9" stroke-linecap="round" stroke-linejoin="round"/>
<polyline points="287.5,384 295.5,392 303.5,384" fill="none" stroke="#3d4a1e" stroke-width="3.9" stroke-linecap="round" stroke-linejoin="round"/>
</svg>
<!-- title -->
<div class="a" style="left:555px;top:420.5px;width:207px;height:1px;background:#8a8a8a"></div>


<div class="t" id="ti1" style="left:522px;top:296.4px;width:500px;transform:scaleX(1.1);text-align:center;font-size:18.5px;font-weight:bold;color:#3a461c">ГОСТЬОВА ЛЕКЦІЯ</div>
<div class="t" id="ti2" style="left:522px;top:321.7px;width:500px;transform:scaleX(1.1);text-align:center;font-size:18.5px;font-weight:bold;color:#3a461c">НА ТЕМУ:</div>
<div class="t" id="ti3" style="left:522px;top:347.5px;width:500px;transform:scaleX(1.085);text-align:center;font-size:18.5px;font-weight:bold;color:#3a461c">“ПОХОДЖЕННЯ БОЛІТ&nbsp; ТА ЇХНЯ РОЛЬ У</div>
<div class="t" id="ti4" style="left:522px;top:372.5px;width:500px;transform:scaleX(1.1);text-align:center;font-size:18.5px;font-weight:bold;color:#3a461c">ФУНКЦІОНУВАННІ ГЛОБАЛЬНОЇ</div>
<div class="t" id="ti5" style="left:522px;top:398.0px;width:500px;transform:scaleX(1.1);text-align:center;font-size:18.5px;font-weight:bold;color:#3a461c">ГІДРОСФЕРИ”</div>
<div class="t" id="lec1" style="left:558px;top:465.9px;font-size:16px;font-weight:bold;color:#f3f1e3">Лектор:</div>
<div class="t" id="lec2" style="left:559px;top:485.9px;font-size:16px;color:#f3f1e3">к.г.н., доц. кафедри</div>
<div class="t" id="lec3" style="left:559px;top:507.1px;font-size:16px;color:#f3f1e3">географії та методики її</div>
<div class="t" id="lec4" style="left:559px;top:527.7px;font-size:16px;color:#f3f1e3">навчання</div>
<div class="t" id="lec5" style="left:558px;top:548.5px;font-size:16px;font-weight:bold;color:#f3f1e3">Семеген Оксана Олегівна</div>


<!-- LEFT TOOL PANEL -->
<div class="a" style="left:158.5px;top:194.5px;width:25px;height:160.5px;background:#fff;border:1px solid #dcdcdc;border-radius:3px"></div>
<div class="a" style="left:161.7px;top:197.4px;width:20px;height:2.3px;background:#b8b8b8;border-radius:1px"></div>
<div class="a" style="left:160.8px;top:205.2px;width:21px;height:20.4px;background:#1567d8;border-radius:2px"></div>
<svg style="left:0;top:0" width="1280" height="720">
 <path d="M168.2 210.5 L168.2 219.2 L170.4 217.2 L172.2 220.8 L173.6 220.1 L171.9 216.6 L174.8 216.4 Z" fill="#fff"/>
 <path d="M179.4 219.3 V222.6 H176.1 Z" fill="#fff"/>
 <g fill="#333">
  <path d="M179.4 246.3 V249.6 H176.1 Z"/>
  <path d="M179.4 271.3 V274.6 H176.1 Z"/>
  <path d="M179.4 296.3 V299.6 H176.1 Z"/>
  <path d="M179.4 321.8 V325.1 H176.1 Z"/>
  <path d="M179.4 346.8 V350.1 H176.1 Z"/>
 </g>
 <g fill="none" stroke="#333" stroke-width="1.2" stroke-linejoin="round" stroke-linecap="round">
  <path d="M175.3 241 A4.9 4.9 0 1 0 171.5 245.8 L175.8 246.2 Z"/>
  <path d="M168.3 239.6 H173.2 M168.3 242.1 H172.2"/>
  <path d="M166.3 270.6 L166.9 267.6 L173.4 261.1 Q174.6 260 175.6 261.1 Q176.6 262.2 175.5 263.3 L169.1 269.8 Z M172.3 262.3 L174.4 264.4"/>
  <path d="M168.5 271.5 Q171.5 270.5 174.5 271" stroke="#888" stroke-width="1"/>
  <path d="M171.5 295.7 Q166.5 296.5 165.8 293.2 Q165.5 289.3 171.2 288.8 Q176.3 288.6 175.8 291.8 Q175.4 294.3 172.8 294.3 Q170.3 294.5 171 296.8"/>
  <path d="M165.7 312.5 v11 M176.3 312.5 v11 M165.7 312.5 h10.6 M165.7 323.5 h10.6" stroke-dasharray="1.6 1.2"/>
 </g>
 <text x="171" y="321.6" text-anchor="middle" font-family="Liberation Sans" font-size="8.5" font-weight="bold" fill="#333">A</text>
 <g fill="none" stroke="#333" stroke-width="1.2" stroke-linejoin="round">
  <path d="M165.8 348 L167.7 342 Q169.8 338.3 173 339.6 Q176 341.3 174.4 344.6 L170.3 348.9 Z"/>
  <path d="M167.5 345.5 L171.5 347"/>
  <path d="M165.5 349.2 H172" stroke-width="1"/>
 </g>
</svg>

<!-- RIGHT PANEL -->
<div class="a" style="left:1093px;top:197.3px;width:1.2px;height:11.5px;background:#666"></div>
<div class="a" style="left:1104px;top:468.3px;width:20px;height:20.2px;border:1px solid #d8d8d8;border-radius:2px;background:#fff"></div>
<div class="t" style="left:1104px;top:472.5px;width:20px;text-align:center;font-size:8px;color:#333">1</div>
<div class="t" style="left:1105px;top:496.2px;width:20px;text-align:center;font-size:10px;color:#444">38</div>
<div class="a" style="left:1104px;top:559.5px;width:20px;height:1px;background:#e4e4e4"></div>
<svg style="left:0;top:0" width="1280" height="720">
 <g fill="none" stroke="#333" stroke-width="1.3" stroke-linejoin="round" stroke-linecap="round">
  <circle cx="1116.2" cy="202.3" r="4.2"/>
  <path d="M1112 205.5 A4.2 4.2 0 0 1 1112.6 199.3"/>
  <path d="M1114.5 201 h3.3 M1114.5 203.3 h3.3" stroke-width="1"/>
  <path d="M1109.7 222.8 H1115.6 V232.3 L1112.65 229.5 L1109.7 232.3 Z" stroke-width="1.2"/>
  <path d="M1117.3 223.8 h2.4 M1117.3 226.2 h2.4 M1117.3 228.6 h2.4" stroke-width="1"/>
  <path d="M1112.8 249.5 H1117.1 L1119.6 252 V257.4 H1112.8 Z" stroke-width="1.2"/>
  <path d="M1110.4 255.5 V247.3 H1115.3" stroke-width="1.1"/>
  <path d="M1112 527.2 L1115 524.2 L1118 527.2" stroke="#888" stroke-width="1.1"/>
  <path d="M1112 546.2 L1115 549.2 L1118 546.2" stroke="#222" stroke-width="1.5"/>
  <path d="M1119.2 569.2 A4.6 4.6 0 1 0 1119.6 574.8" stroke-width="1.4"/>
  <path d="M1119.6 567.3 V570.3 H1116.6" stroke-width="1.2"/>
  <path d="M1110.8 590.6 H1116.6 L1119.6 593.6 V600 H1110.8 Z" stroke-width="1.3"/>
  <path d="M1113.5 597.5 L1116.5 594.5 M1114.2 594.5 H1116.5 V596.8" stroke-width="1"/>
  <circle cx="1114.4" cy="618.3" r="3.9" stroke-width="1.4"/>
  <path d="M1117.2 621.1 L1120.2 624.1 M1114.4 616.2 v4.2 M1112.3 618.3 h4.2" stroke-width="1.3"/>
  <circle cx="1114.4" cy="641.3" r="3.9" stroke-width="1.4"/>
  <path d="M1117.2 644.1 L1120.2 647.1 M1112.3 641.3 h4.2" stroke-width="1.3"/>
 </g>
 <path d="M1122.8 600 V603.3 H1119.5 Z" fill="#333"/>
</svg>

<!-- ZOOM BOTTOM TOOLBAR -->
<div class="a" style="left:0;top:654px;width:1280px;height:38px;background:#000"></div>
<!-- floating pen -->
<div class="a" style="left:9.5px;top:611.5px;width:33px;height:33px;border-radius:50%;border:1.6px solid #c4c4c4;background:#232427"></div>
<svg style="left:0;top:0" width="1280" height="720">
 <path d="M20.5 633.5 L21.3 630.3 L28.8 622.8 Q30.2 621.5 31.5 622.8 Q32.8 624.2 31.5 625.5 L24 633 Z M27.3 624.3 L30 627" fill="none" stroke="#2fd08a" stroke-width="1.5" stroke-linejoin="round"/>
</svg>
<svg style="left:0;top:0" width="1280" height="720">
 <g fill="none" stroke="#e8e8e8" stroke-width="1.3" stroke-linecap="round" stroke-linejoin="round">
  <!-- mic -->
  <rect x="32.6" y="660.2" width="5" height="10.6" rx="2.5"/>
  <path d="M30.3 667.3 Q30.3 673.3 35.1 673.3 Q39.9 673.3 39.9 667.3 M35.1 673.3 V676.3 M31.8 676.6 H38.4"/>
  <path d="M53.8 668.3 L56 666.2 L58.2 668.3" stroke-width="1.1"/>
  <!-- video -->
  <rect x="88.6" y="663.6" width="11" height="10.2" rx="2.2"/>
  <path d="M99.6 667.2 L104.6 664.3 V673.1 L99.6 670.2"/>
  <path d="M118.8 668.3 L121 666.2 L123.2 668.3" stroke-width="1.1"/>
  <!-- participants -->
  <circle cx="483.6" cy="665.3" r="2.3"/>
  <path d="M480.3 674.6 V672.2 Q480.3 669.3 483.6 669.3 Q485.2 669.3 486 670"/>
  <circle cx="488.8" cy="668.8" r="2.2"/>
  <rect x="485" y="671.6" width="7.4" height="3.6" rx="1.8"/>
  <path d="M518.8 668.3 L521 666.2 L523.2 668.3" stroke-width="1.1"/>
  <!-- chat -->
  <path d="M553.3 664.3 H565.6 V672.4 H557.8 L554.8 675.6 V672.4 H553.3 Z"/>
  <path d="M578.8 668.3 L581 666.2 L583.2 668.3" stroke-width="1.1"/>
  <!-- heart -->
  <path d="M622.3 675.5 L615.7 669.3 Q613.2 666.2 615.5 663.6 Q618.5 661.2 622.3 664.6 Q626.1 661.2 629.1 663.6 Q631.4 666.2 628.9 669.3 Z"/>
  <path d="M644.8 668.3 L647 666.2 L649.2 668.3" stroke-width="1.1"/>
  <!-- share -->
  <rect x="680.5" y="662.8" width="15.6" height="11.4" rx="1.6"/>
  <path d="M688.3 671.3 V665.8 M686 668 L688.3 665.6 L690.6 668" stroke-width="1.4"/>
  <path d="M709.8 668.3 L712 666.2 L714.2 668.3" stroke-width="1.1"/>
  <!-- more -->
  <circle cx="869.3" cy="668.3" r="8"/>
 </g>
 <g fill="#e8e8e8">
  <circle cx="865.8" cy="668.3" r="1"/><circle cx="869.3" cy="668.3" r="1"/><circle cx="872.8" cy="668.3" r="1"/>
 </g>
 <!-- shield -->
 <path d="M777 663 L782.6 665 V669.5 Q782.6 674.3 777 676.3 Q771.4 674.3 771.4 669.5 V665 Z" fill="none" stroke="#e8e8e8" stroke-width="1.3" stroke-linejoin="round"/>
 <path d="M777 665.2 V669.5 H772.8 V665.8 Z M777 669.5 H781.2 Q780.8 673 777 674.5 Z" fill="#e8e8e8"/>
 <!-- chat badge -->
 <circle cx="567.3" cy="664.2" r="5.6" fill="#e8334a"/>
 <path d="M567.3 661.2 V665.3" stroke="#fff" stroke-width="1.4"/>
 <circle cx="567.3" cy="667.2" r="0.8" fill="#fff"/>
 <!-- end -->
 <path d="M1242.2 661.8 H1249.8 L1253.6 668.5 L1249.8 675.2 H1242.2 L1238.4 668.5 Z" fill="#000" stroke="#d01c52" stroke-width="1.6" stroke-linejoin="round"/>
 <path d="M1243.6 666 L1248.4 671 M1248.4 666 L1243.6 671" stroke="#fff" stroke-width="1.8" stroke-linecap="round"/>
</svg>
<div class="t" style="left:497px;top:663px;font-size:8.5px;font-weight:bold;color:#9a9a9a">28</div>
<div class="t lb" id="b1" style="transform:scaleX(0.854);left:26px">Звук</div>
<div class="t lb" id="b2" style="transform:scaleX(0.794);left:86px">Видео</div>
<div class="t lb" id="b3" style="transform:scaleX(0.840);left:467px">Участники</div>
<div class="t lb" id="b4" style="transform:scaleX(0.829);left:553px">Чат</div>
<div class="t lb" id="b5" style="transform:scaleX(0.830);left:595px">Отреагировать</div>
<div class="t lb" id="b6" style="transform:scaleX(0.818);left:666px">Поделиться</div>
<div class="t lb" id="b7" style="transform:scaleX(0.842);left:726px">Инструменты организатора</div>
<div class="t lb" id="b8" style="transform:scaleX(0.851);left:840px">Дополнительно</div>
<div class="t lb" id="b9" style="transform:scaleX(0.846);left:1223px">Завершение</div>

<!-- TASKBAR -->
<div class="a" style="left:0;top:692px;width:1280px;height:28px;background:#3c2b21"></div>
<div class="a" style="left:0;top:692px;width:1280px;height:1px;background:#7a6e68"></div>
<div class="a" style="left:32px;top:693px;width:191.5px;height:27px;background:#f2f2f2"></div>
<div class="a" style="left:487px;top:693px;width:31.5px;height:27px;background:#5e4e42"></div>
<div class="a" style="left:294px;top:718.5px;width:26px;height:1.5px;background:#e8dcc8"></div>
<div class="a" style="left:487px;top:718.5px;width:31.5px;height:1.5px;background:#e8dcc8"></div>
<svg style="left:0;top:0" width="1280" height="720">
 <g fill="#f4f4f4">
  <rect x="10.5" y="701.5" width="5.2" height="5" /><rect x="16.4" y="701" width="5.2" height="5.5"/>
  <rect x="10.5" y="707.2" width="5.2" height="5"/><rect x="16.4" y="707.2" width="5.2" height="5.5"/>
 </g>
 <circle cx="47.8" cy="704.7" r="3.6" fill="none" stroke="#333" stroke-width="1.2"/>
 <path d="M45.2 707.3 L40.8 711.7" stroke="#333" stroke-width="1.3"/>
 <!-- sparkle -->
 <path d="M192 699.5 Q193 705 198.5 706 Q193 707 192 712.5 Q191 707 185.5 706 Q191 705 192 699.5 Z" fill="#f2b820"/>
 <path d="M207.2 705.5 Q207.7 708.3 210.2 708.8 Q207.7 709.3 207.2 712 Q206.7 709.3 204.2 708.8 Q206.7 708.3 207.2 705.5 Z" fill="#f0c030"/>
 <path d="M179 709.5 Q179.4 711.6 181.5 712 Q179.4 712.4 179 714.5 Q178.6 712.4 176.5 712 Q178.6 711.6 179 709.5 Z" fill="#3a8ee8"/>
 <circle cx="203" cy="700.3" r="1" fill="#e07a50"/>
 <circle cx="214.6" cy="712.8" r="0.9" fill="#80c040"/>
 <!-- chrome -->
 <circle cx="241.8" cy="706" r="7.8" fill="#db4437"/>
 <path d="M241.8 706 L248.6 709.9 A7.8 7.8 0 0 1 234.8 709.4 Z" fill="#0f9d58"/>
 <path d="M241.8 706 L249.6 706 A7.8 7.8 0 0 1 241.8 713.8 Z" fill="#f4c20d"/>
 <circle cx="241.8" cy="706" r="3.6" fill="#fff"/>
 <circle cx="241.8" cy="706" r="2.7" fill="#4285f4"/>
 <!-- opera -->
 <ellipse cx="274.5" cy="706" rx="7.2" ry="7.6" fill="#e01a2c"/>
 <ellipse cx="274.5" cy="706" rx="2.8" ry="5.5" fill="#3c2b21"/>
 <!-- edge -->
 <circle cx="307" cy="706" r="7.8" fill="#2396d6"/>
 <path d="M307 698.2 A7.8 7.8 0 0 1 314.8 706 L307 706 Z" fill="#3cc898" opacity="0.9"/>
 <path d="M301 709.5 Q301 703 307.5 703 Q312 703 313.5 706.5 Q310 705.2 307.6 706.8 Q305.2 708.6 306.5 712.8 Q301.8 712.5 301 709.5 Z" fill="#164fa8"/>
 <circle cx="303" cy="710" r="2.8" fill="#c8c8c8"/>
 <!-- folder -->
 <path d="M333.2 700.2 H339 L340.5 701.5 H347 V712 H333.2 Z" fill="#f2c440"/>
 <rect x="333.2" y="703" width="13.8" height="9" fill="#fad060"/>
 <rect x="337.5" y="707" width="5.5" height="5" fill="#2f80d0"/>
 <!-- viber -->
 <circle cx="372.5" cy="705.3" r="7.6" fill="#7d5fe0"/>
 <circle cx="372.5" cy="705.3" r="5.6" fill="none" stroke="#f2eefc" stroke-width="1.3"/>
 <path d="M370 702.6 Q370.5 706.8 375 708.3" stroke="#f2eefc" stroke-width="1.6" fill="none"/>
 <!-- telegram -->
 <circle cx="405.2" cy="706.4" r="7.3" fill="#2ea2db"/>
 <path d="M401 706.2 L409.8 702.6 L408.3 710.4 L405.2 707.8 Z" fill="#f4f8fc"/>
 <!-- whatsapp -->
 <circle cx="438" cy="706" r="7.2" fill="none" stroke="#35c456" stroke-width="1.7"/>
 <path d="M435.5 703 Q435 707.5 440.5 709" stroke="#35c456" stroke-width="1.7" fill="none"/>
 <!-- messenger -->
 <circle cx="470.5" cy="706" r="7.6" fill="#1e6ce6"/>
 <path d="M466.2 708.4 L469.4 704.5 L471.5 706.3 L474.8 703.6 L471.6 707.4 L469.5 705.7 Z" fill="#fff" stroke="#fff" stroke-width="0.8" stroke-linejoin="round"/>
 <!-- zoom -->
 <circle cx="503.5" cy="706" r="8" fill="#1f62e0"/>
 <text x="503.5" y="709" text-anchor="middle" font-family="Liberation Sans" font-size="8" font-weight="bold" fill="#fff">zm</text>
 <!-- network pc -->
 <rect x="529" y="699" width="13" height="9" fill="#4a78c8"/>
 <rect x="530.5" y="700.5" width="10" height="6" fill="#c8dcf0"/>
 <ellipse cx="536" cy="711" rx="4.5" ry="1.8" fill="#d8d8d0"/>
 <!-- tray -->
 <g fill="none" stroke="#e8e0dc" stroke-width="1.1" stroke-linecap="round" stroke-linejoin="round">
  <path d="M1068.8 708 L1072.2 704.6 L1075.6 708"/>
  <path d="M1101.5 705.5 V710 H1108.3 V705.5 Z M1103 702.2 V705.5 M1107 702.2 V705.5 M1103 712.5 h4"/>
  <path d="M1119.2 702 h1.8 v8.5 h-1.8 z M1118 712.3 h4.2" stroke-width="1.3"/>
  <path d="M1130.5 704.3 h2 l2.6 -2.4 v10 l-2.6 -2.4 h-2 z M1137 704.5 q1 2 0 4 M1139 703 q2 3.5 0 7"/>
  <path d="M1149 712 q1-5 6-6 M1151 712 q0.8-3 4-4 M1147 712 q1.5-7.5 8-8.3"/>
 </g>
 <path d="M1083.5 708.8 Q1082 705.6 1085 704.8 Q1086 702 1089 702.6 Q1091.5 703 1092 705.3 Q1094.5 705.6 1094 708.8 Z" fill="#e8e0dc"/>
 <path d="M1162 703 h2.5 v1.5 h-2.5z M1161.5 704.5 h11.5 v5.5 h-11.5 z" fill="#e8e0dc"/>
 <path d="M1253 700.3 h8.5 v7.3 h-4 l-2.2 2 v-2 h-2.3z" fill="#e8e0dc"/>
 <circle cx="1261.5" cy="710.5" r="4.3" fill="#3c2b21" stroke="#e8e0dc" stroke-width="0.9"/>
 <text x="1261.5" y="713" text-anchor="middle" font-family="Liberation Sans" font-size="6.5" fill="#e8e0dc">4</text>
</svg>
<div class="t" id="poisk" style="left:59.2px;top:701.8px;font-size:10.3px;color:#333">Поиск</div>
<div class="t" id="ukr" style="left:1180.5px;top:701.8px;font-size:8.5px;color:#ebe4e0">УКР</div>
<div class="t" id="time" style="left:1199px;top:696.8px;width:48px;text-align:center;font-size:8.5px;color:#ebe4e0">14:04</div>
<div class="t" id="date" style="left:1198px;top:708.2px;width:48px;transform:scaleX(0.9);transform-origin:50% 0;text-align:center;font-size:8.5px;color:#ebe4e0">21.04.2026</div>
<div class="a" style="left:1276px;top:693px;width:1px;height:27px;background:#6a5a50"></div>
</body></html>
